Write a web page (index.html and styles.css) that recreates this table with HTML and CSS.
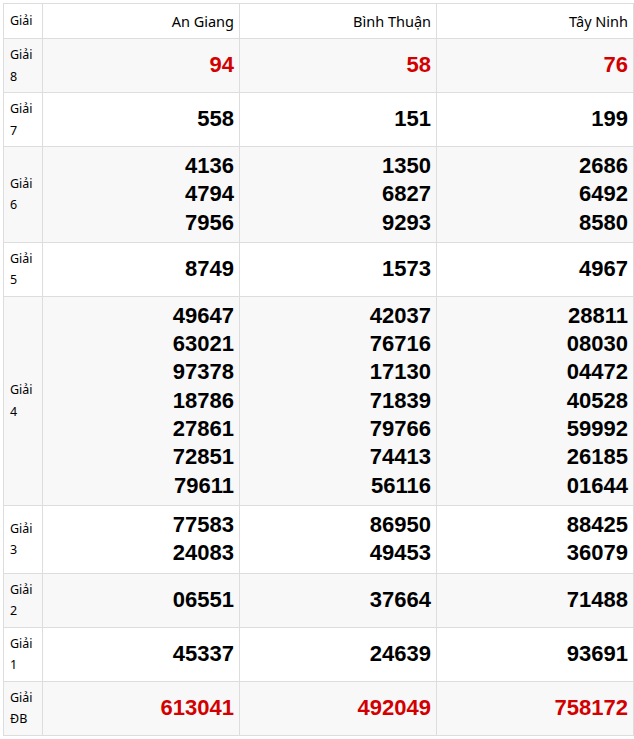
FILE: index.html
```html
<!DOCTYPE html>
<html lang="vi">
<head>
<meta charset="utf-8">
<link rel="stylesheet" href="styles.css">
</head>
<body>
<table class="kq">
  <colgroup>
    <col class="c-label"><col class="c-prov"><col class="c-prov"><col class="c-prov">
  </colgroup>
  <thead>
    <tr><th class="lbl">Giải</th><th>An Giang</th><th>Bình Thuận</th><th>Tây Ninh</th></tr>
  </thead>
  <tbody>
    <tr class="alt"><td class="lbl">Giải<br>8</td><td class="num red">94</td><td class="num red">58</td><td class="num red">76</td></tr>
    <tr><td class="lbl">Giải<br>7</td><td class="num">558</td><td class="num">151</td><td class="num">199</td></tr>
    <tr class="alt"><td class="lbl">Giải<br>6</td><td class="num">4136<br>4794<br>7956</td><td class="num">1350<br>6827<br>9293</td><td class="num">2686<br>6492<br>8580</td></tr>
    <tr><td class="lbl">Giải<br>5</td><td class="num">8749</td><td class="num">1573</td><td class="num">4967</td></tr>
    <tr class="alt"><td class="lbl">Giải<br>4</td><td class="num">49647<br>63021<br>97378<br>18786<br>27861<br>72851<br>79611</td><td class="num">42037<br>76716<br>17130<br>71839<br>79766<br>74413<br>56116</td><td class="num">28811<br>08030<br>04472<br>40528<br>59992<br>26185<br>01644</td></tr>
    <tr><td class="lbl">Giải<br>3</td><td class="num">77583<br>24083</td><td class="num">86950<br>49453</td><td class="num">88425<br>36079</td></tr>
    <tr class="alt"><td class="lbl">Giải<br>2</td><td class="num">06551</td><td class="num">37664</td><td class="num">71488</td></tr>
    <tr><td class="lbl">Giải<br>1</td><td class="num">45337</td><td class="num">24639</td><td class="num">93691</td></tr>
    <tr class="alt"><td class="lbl">Giải<br>ĐB</td><td class="num red">613041</td><td class="num red">492049</td><td class="num red">758172</td></tr>
  </tbody>
</table>
</body>
</html>
```
FILE: styles.css
```css
html, body {
  margin: 0;
  padding: 0;
  background: #fff;
}
body {
  padding: 3px 2px 0 3px;
  font-family: "Noto Sans", "Open Sans", sans-serif;
  color: #000;
}
.kq {
  border-collapse: collapse;
  width: 629px;
  table-layout: fixed;
}
.c-label { width: 39px; }
.c-prov { width: 197px; }
.kq th, .kq td {
  border: 1px solid #dddddd;
  vertical-align: middle;
}
.kq th {
  font-weight: normal;
  font-size: 14.5px;
  line-height: 22px;
  padding: 6px 5px 6px 5px;
  text-align: right;
  height: 21px;
}
.kq th.lbl, .kq td.lbl {
  text-align: left;
  font-size: 12.5px;
  line-height: 21.5px;
  padding: 5px 2px 5px 6px;
}
.kq th.lbl { font-size: 12.5px; line-height: 22px; padding-top: 6px; padding-bottom: 6px; }
.kq tr.alt td { background: #f8f8f8; }
.kq td.num {
  text-align: right;
  font-family: "Liberation Sans", Arial, sans-serif;
  font-weight: bold;
  font-size: 22px;
  line-height: 28.3px;
  padding: 5px 5px 5px 5px;
}
.kq td.red { color: #d20000; }
```
